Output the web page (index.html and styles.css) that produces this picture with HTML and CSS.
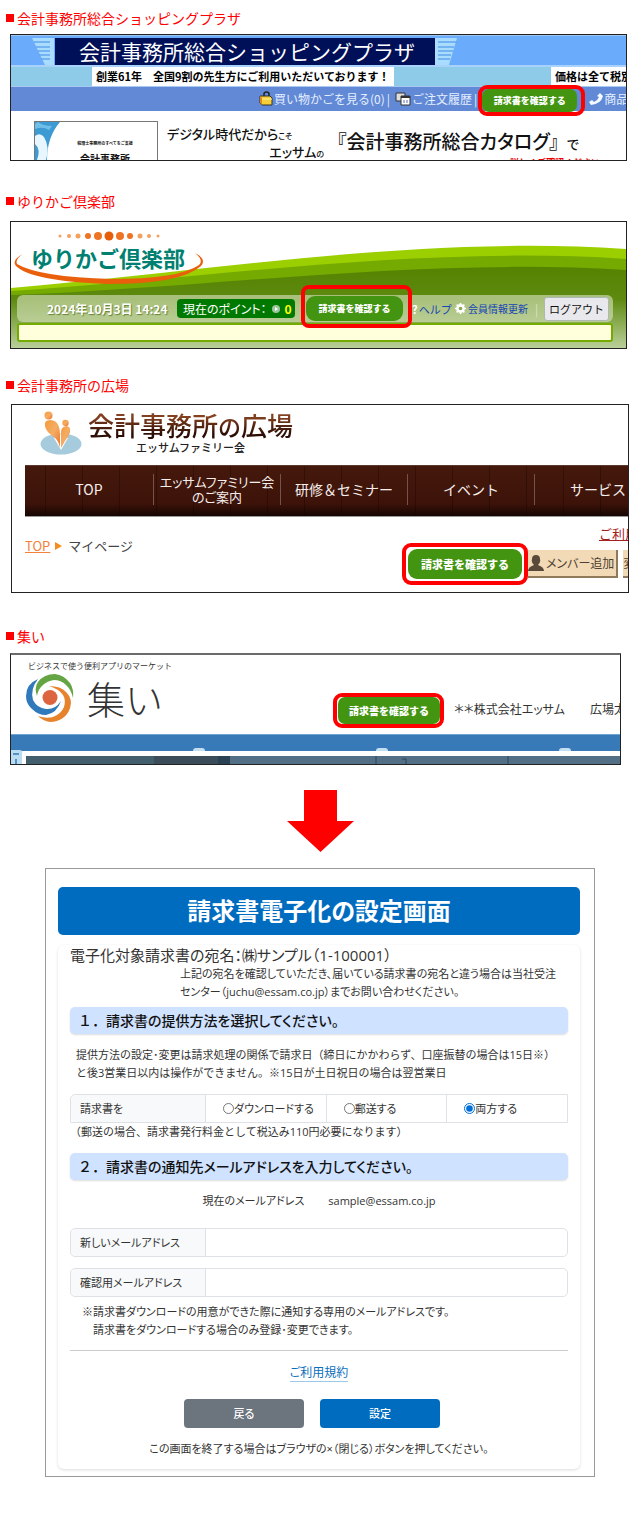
FILE: index.html
```html
<!DOCTYPE html>
<html lang="ja">
<head>
<meta charset="utf-8">
<meta name="viewport" content="width=device-width, initial-scale=1">
<title>請求書電子化の設定</title>
<link rel="stylesheet" href="styles.css">
</head>
<body>
<main class="guide">
  <section class="site site-plaza">
    <h2 class="site-name">会計事務所総合ショッピングプラザ</h2>
    <div class="window plaza">
      <div class="plaza-brand">
        <svg class="stripes" viewBox="0 0 22 27" aria-hidden="true"><path d="M0 0h22v27h-9z" fill="#a9dcff"/><path d="M2 4h16M4 9h14M6 13h12M7 17h11M9 21h9" stroke="#62a5ee" stroke-width="1.6"/></svg>
        <span class="plaza-title">会計事務所総合ショッピングプラザ</span>
        <svg class="stripes" viewBox="0 0 22 27" aria-hidden="true"><path d="M0 0h22l-8 27H0z" fill="#a9dcff"/><path d="M3 4h19M3 9h16M3 13h15M3 17h13M3 21h12" stroke="#62a5ee" stroke-width="1.6"/></svg>
      </div>
      <div class="ticker">
        <span class="ticker-main">創業61年　全国9割の先生方にご利用いただいております！</span>
        <span class="ticker-side">価格は全て税別</span>
      </div>
      <nav class="plaza-nav">
        <svg class="ico16" viewBox="0 0 16 16" aria-hidden="true"><path d="M6 5V3q0-2 2.500-2T11 3v2" fill="none" stroke="#222" stroke-width="1.500"/><path d="M2 5h10l2 2v7H4l-2-2z" fill="#f6ce35" stroke="#333"/><path d="M2 5l2 2v7l-2-2z" fill="#e58a1c"/><path d="M4 8h10" stroke="#fff09a"/></svg>
        <a href="#cart">買い物かごを見る(0)</a><span class="bar">|</span>
        <svg class="ico16 ico-pages" viewBox="0 0 16 16" aria-hidden="true"><path d="M1 2h9v8H1z" fill="#ddd" stroke="#333"/><path d="M6 5h9v9H6z" fill="#fff" stroke="#333"/><path d="M6 6h9" stroke="#333" stroke-width="2"/><path d="M8 9h2v3H8zM11 9h2v3h-2z" fill="#a9b9d9"/></svg>
        <a href="#orders">ご注文履歴</a><span class="bar">|</span>
        <span class="marker marker-plaza"><button class="confirm" type="button">請求書を確認する</button></span>
        <svg class="ico16" viewBox="0 0 16 16" aria-hidden="true"><path d="M12 2l3 3q-2 8-12 9l-2-3 3-2 2 2q4-2 5-5l-2-1z" fill="#f4faff"/></svg>
        <a href="#products">商品検索</a>
      </nav>
      <div class="plaza-hero">
        <div class="book">
          <svg class="book-art" viewBox="0 0 26 38" preserveAspectRatio="none" aria-hidden="true"><path d="M0 0h25Q12 15 12 38H0z" fill="#3d9bd4"/><path d="M0 14q5-4 9 1 6 10 2 23H2q4-11-2-16z" fill="#e8f6ff"/><path d="M3 0q5 4 14 4L14 8Q8 4 0 7V2z" fill="#71bfe8"/></svg>
          <div class="book-copy"><span class="book-small">税理士事務所のすべてをご支援</span><strong class="book-name">会計事務所</strong></div>
        </div>
        <div class="hero-lead">デジタル時代だから<small>こそ</small><span>エッサム<small>の</small></span></div>
        <div class="hero-copy"><p>『会計事務所総合カタログ』<span>で</span></p><strong>詳しくご確認ください</strong></div>
      </div>
    </div>
  </section>

  <section class="site site-yurikago">
    <h2 class="site-name">ゆりかご倶楽部</h2>
    <div class="window yurikago">
      <svg class="hills" viewBox="0 0 616 126" preserveAspectRatio="none" aria-hidden="true">
        <defs><linearGradient id="fade" x1="0" y1="0" x2="0" y2="1"><stop offset="0" stop-color="#558300"/><stop offset=".4" stop-color="#5e8a10"/><stop offset="1" stop-color="#b9d09a"/></linearGradient></defs>
        <path d="M0 66C200 49 410 13 616 27V126H0z" fill="#9ccf00"/>
        <path d="M0 69C200 56 410 23 616 37V126H0z" fill="#75aa00"/>
        <path d="M0 73C200 66 410 35 616 48V126H0z" fill="url(#fade)"/>
      </svg>
      <a class="yurikago-logo" href="#yurikago">
        <svg class="logo-arc" viewBox="0 0 192 58" aria-hidden="true"><g fill="#ee7325"><circle cx="47" cy="8" r="1.500" fill="#f3a15d"/><circle cx="56" cy="8" r="2" fill="#f3a15d"/><circle cx="65" cy="8" r="2.500" fill="#f3a15d"/><circle cx="75" cy="8" r="3"/><circle cx="85" cy="8" r="4"/><circle cx="96" cy="8" r="4.500" fill="#e85d08"/><circle cx="107" cy="8" r="4"/><circle cx="117" cy="8" r="3"/><circle cx="127" cy="8" r="2.500" fill="#f3a15d"/><circle cx="136" cy="8" r="2" fill="#f3a15d"/><circle cx="145" cy="8" r="1.500" fill="#f3a15d"/></g><path d="M10 26Q-2 32 3 38 18 53 94 56q74 0 94-18 6-7-6-13 9 7 4 12-20 14-88 14Q26 49 4 36q-2-5 6-10z" fill="#e95f0b"/></svg>
        <span>ゆりかご倶楽部</span>
      </a>
      <div class="member-bar">
        <time>2024年10月3日 14:24</time>
        <span class="points">現在のポイント： <svg class="ico8" viewBox="0 0 8 8" aria-hidden="true"><circle cx="4" cy="4" r="4" fill="#9bc79b"/><path d="M3 2l3 2-3 2z" fill="#fff"/></svg> <b>0</b></span>
        <span class="marker marker-yurikago"><button class="confirm" type="button">請求書を確認する</button></span>
        <a class="help" href="#help"><span>?</span>ヘルプ</a>
        <a class="update" href="#update"><svg class="ico10" viewBox="0 0 10 10" aria-hidden="true"><circle cx="5" cy="5" r="3" fill="none" stroke="#fff" stroke-width="2"/><path d="M5 0v10M0 5h10M1.500 1.500l7 7M8.500 1.500l-7 7" stroke="#fff" stroke-width="1.500"/><circle cx="5" cy="5" r="1.600" fill="#87a757"/></svg>会員情報更新</a>
        <span class="bar">|</span>
        <button class="logout" type="button">ログアウト</button>
      </div>
      <div class="notice"></div>
    </div>
  </section>

  <section class="site site-hiroba">
    <h2 class="site-name">会計事務所の広場</h2>
    <div class="window hiroba">
      <a class="hiroba-logo" href="#hiroba">
        <svg class="hiroba-mark" viewBox="0 0 42 44" aria-hidden="true"><defs><linearGradient id="person" x2="1" y2="1"><stop stop-color="#f59a3c"/><stop offset=".5" stop-color="#f4ad64"/><stop offset="1" stop-color="#ed6f2c"/></linearGradient></defs><ellipse cx="21" cy="33" rx="20.500" ry="10.500" fill="#a5cbdd"/><path d="M21 39l-7-12 7-4 7 4z" fill="#fff"/><g fill="url(#person)"><circle cx="8.500" cy="4.500" r="4"/><path d="M5 15q-1-6 5-6 7 0 9 7 1 4 1 8v13q-1-7-6-11-8-5-9-11z"/><circle cx="25.500" cy="12" r="3.200"/><path d="M21 24q-1-8 5-9 5 0 4 6-1 4-5 9l-4 7z"/></g></svg>
        <span class="hiroba-name"><b>会計事務所<i>の</i>広場</b><span>エッサムファミリー会</span></span>
      </a>
      <nav class="hiroba-nav">
        <a href="#top">TOP</a><a class="two-line" href="#about">エッサムファミリー会<br>のご案内</a><a href="#seminar">研修＆セミナー</a><a href="#event">イベント</a><a href="#service">サービス</a>
      </nav>
      <div class="hiroba-page">
        <div class="crumbs"><a href="#top">TOP</a><svg class="ico8" viewBox="0 0 8 8" aria-hidden="true"><path d="M0 0l7 4-7 4z" fill="#f68c1e"/></svg><span>マイページ</span></div>
        <div class="hiroba-tools">
          <a class="terms" href="#guide">ご利用案内</a>
          <div class="tool-row">
            <span class="marker marker-hiroba"><button class="confirm" type="button">請求書を確認する</button></span>
            <button class="tool" type="button"><svg class="ico16" viewBox="0 0 16 16" aria-hidden="true"><path d="M0 16q0-4 6-6-3-3-2-6 0-4 4-4t4 4q1 3-2 6 6 2 6 6z" fill="#59493a"/></svg>メンバー追加</button>
            <button class="tool" type="button">変更</button>
          </div>
        </div>
      </div>
    </div>
  </section>

  <section class="site site-tsudoi">
    <h2 class="site-name">集い</h2>
    <div class="window tsudoi">
      <div class="tsudoi-head">
        <a class="tsudoi-logo" href="#tsudoi">
          <small>ビジネスで使う便利アプリのマーケット</small>
          <span><svg class="tsudoi-mark" viewBox="0 0 48 48" aria-hidden="true"><circle cx="24" cy="23.500" r="7.500" fill="#dc6540"/><path d="M12 5Q0 10 0 22q0 8 6 13 6 6 14 6 11-2 15-14-6 9-15 8-9-1-13-9Q4 15 12 5z" fill="#3079bb"/><path d="M11 22Q8 14 12 8 18 0 29 0q9 1 15 9 4 6 3 15-2-9-7-13-5-5-12-5-7 1-11 5-5 4-6 11z" fill="#65a443"/><path d="M23 12q12 0 17 6 5 5 5 11-1 10-8 15-6 4-13 4-7-1-12-6 8 3 15 1 8-3 11-10 2-7-1-12-4-6-14-9z" fill="#e6842e"/></svg><b>集い</b></span>
        </a>
        <span class="marker marker-tsudoi"><button class="confirm" type="button">請求書を確認する</button></span>
        <span class="company">＊＊株式会社エッサム</span><span class="company person">広場太郎</span>
      </div>
      <div class="tsudoi-bar"><svg viewBox="0 0 609 3" preserveAspectRatio="none" aria-hidden="true"><path d="M182 3q0-3 3-3h6q3 0 3 3zM365 3q0-3 3-3h6q3 0 3 3zM548 3q0-3 3-3h6q3 0 3 3z" fill="#c5dff2"/></svg></div>
      <div class="tsudoi-photo"><svg viewBox="0 0 594 8" preserveAspectRatio="none" aria-hidden="true"><path d="M0 0h594v8H0z" fill="#536f85"/><path d="M0 0h128v8H0z" fill="#435f6e"/><path d="M128 0h64v8h-64z" fill="#3c4d5a"/><path d="M192 0h12v8h-12z" fill="#294354"/><path d="M350 0v8M482 0v8M376 3h4v5" fill="none" stroke="#2d475a"/></svg></div>
      <svg class="tsudoi-tab" viewBox="0 0 11 14" aria-hidden="true"><path d="M0 0h9q2 0 2 2v12H0z" fill="#b9dcf3"/><path d="M2 4h6M5 9v5" stroke="#377ab7" stroke-width="1.500"/></svg>
    </div>
  </section>

  <svg class="arrow" viewBox="0 0 67 62" role="img" aria-label="次の画面へ"><path d="M17 0h33v31h17L33.500 62 0 31h17z" fill="#f00"/></svg>

  <section class="screen">
    <h1 class="screen-title">請求書電子化の設定画面</h1>
    <form class="card">
      <p class="addressee">電子化対象請求書の宛名：㈱サンプル（1-100001）</p>
      <p class="addressee-note">上記の宛名を確認していただき、届いている請求書の宛名と違う場合は当社受注<br>センター（juchu@essam.co.jp）までお問い合わせください。</p>
      <h2 class="step"><span>１．</span>請求書の提供方法を選択してください。</h2>
      <p class="explain">提供方法の設定･変更は請求処理の関係で請求日（締日にかかわらず、口座振替の場合は15日※）<br>と後3営業日以内は操作ができません。※15日が土日祝日の場合は翌営業日</p>
      <div class="choices" role="radiogroup" aria-labelledby="method">
        <span class="cell-label" id="method">請求書を</span>
        <label><input type="radio" name="method">ダウンロードする</label>
        <label><input type="radio" name="method">郵送する</label>
        <label><input type="radio" name="method" checked>両方する</label>
      </div>
      <p class="fee">（郵送の場合、請求書発行料金として税込み110円必要になります）</p>
      <h2 class="step"><span>２．</span>請求書の通知先メールアドレスを入力してください。</h2>
      <p class="current"><span>現在のメールアドレス</span><span>sample@essam.co.jp</span></p>
      <div class="field"><label class="cell-label" for="mail">新しいメールアドレス</label><input id="mail" type="email"></div>
      <div class="field"><label class="cell-label" for="mail2">確認用メールアドレス</label><input id="mail2" type="email"></div>
      <p class="mail-note">※請求書ダウンロードの用意ができた際に通知する専用のメールアドレスです。<br>　請求書をダウンロードする場合のみ登録･変更できます。</p>
      <hr>
      <p class="rules"><a href="#rules">ご利用規約</a></p>
      <div class="actions"><button class="btn btn-back" type="button">戻る</button><button class="btn btn-set" type="submit">設定</button></div>
      <p class="closing">この画面を終了する場合はブラウザの×（閉じる）ボタンを押してください。</p>
    </form>
  </section>
</main>
</body>
</html>
```

FILE: styles.css
```css
* { box-sizing: border-box; }
body {
  margin: 0;
  background: #fff;
  color: #333;
  font: 12px/18px "Open Sans", "Noto Sans CJK JP", sans-serif;
}
h1, h2, p { margin: 0; font-weight: 400; }
button, input { font: inherit; margin: 0; }
svg { display: block; flex: none; }
a { color: inherit; text-decoration: none; }

.guide { padding: 8px 0 36px; }
.site { padding: 0 13px 0 10px; }
.site-name {
  display: flex;
  align-items: center;
  gap: 3px;
  margin-left: -4px;
  color: #f00;
  font: 14px/20px "Noto Sans CJK JP", sans-serif;
}
.site-name::before { content: ""; width: 8px; height: 8px; background: #f00; }
.site-plaza { margin-bottom: 30px; }
.site-yurikago { margin-bottom: 26px; }
.site-hiroba { margin-bottom: 33px; padding: 0 11px; }
.site-hiroba .site-name { margin-left: -5px; }
.site-tsudoi { margin-bottom: 25px; padding-right: 19px; }

.window {
  position: relative;
  overflow: hidden;
  margin-top: 6px;
  border: 1px solid #222;
  background: #fff;
  font-family: "Noto Sans CJK JP", sans-serif;
  white-space: nowrap;
}
.ico16 { width: 16px; height: 16px; }
.ico10 { width: 11px; height: 11px; }
.ico8 { width: 8px; height: 8px; }

.marker {
  position: relative;
  z-index: 1;
  display: flex;
  flex: none;
  border: 4px solid #f00;
  border-radius: 9px;
}
.confirm {
  flex: 1;
  padding: 0;
  border: 0;
  border-radius: 7px;
  background: #439511;
  color: #fff;
  font-size: 9px;
  font-weight: 900;
}

/* shopping plaza */
.plaza-brand {
  display: flex;
  align-items: center;
  height: 32px;
  padding: 2px 0 0 21px;
  border-top: 1px solid #9cc5f2;
  border-bottom: 2px solid #a8d2fb;
  background: #6aacfb;
}
.stripes { width: 22px; height: 27px; }
.plaza-title {
  padding: 0 20px 0 24px;
  margin-left: 1px;
  background: #001058;
  color: #fff;
  font-size: 21px;
  line-height: 27px;
}
.ticker {
  display: flex;
  justify-content: space-between;
  height: 19px;
  padding-left: 81px;
  background: #8dcbe9;
  color: #000;
  font-size: 11px;
  font-weight: 700;
  line-height: 18px;
}
.ticker span { background: #fff; }
.ticker-main { padding: 0 4px; }
.ticker-side { width: 75px; padding-left: 4px; overflow: hidden; }
.plaza-nav {
  display: flex;
  align-items: center;
  height: 25px;
  padding-left: 247px;
  border-top: 1px solid #a9c8f3;
  background: #6289d6;
  color: #e4efff;
}
.plaza-nav .bar { margin-left: 2px; }
.ico-pages { margin: 0 1px 0 5px; }
.marker-plaza { width: 107px; height: 31px; margin: 3px 3px 0 1px; padding-right: 4px; }
.plaza-hero { display: flex; height: 49px; padding: 10px 0 0 23px; color: #111; }
.book { display: flex; flex: none; width: 124px; height: 40px; border: 1px solid #777; border-bottom: 0; overflow: hidden; }
.book-art { width: 26px; height: 38px; }
.book-copy { flex: 1; padding-right: 8px; text-align: center; }
.book-small { display: block; padding-top: 16px; font-size: 4px; font-weight: 700; line-height: 10px; }
.book-name { display: block; padding-top: 4px; font-size: 10px; line-height: 14px; }
.hero-lead { flex: none; width: 166px; padding: 5px 0 0 9px; font-size: 13px; font-weight: 500; line-height: 16px; font-feature-settings: "palt"; }
.hero-lead span { display: block; text-align: right; }
.hero-lead small { font-size: 8px; }
.hero-copy { padding-left: 13px; }
.hero-copy p { padding-top: 8px; font-size: 19px; font-weight: 500; line-height: 24px; font-feature-settings: "palt"; }
.hero-copy p span { margin-left: 8px; font-size: 13px; }
.hero-copy strong { display: block; margin-left: 173px; padding-top: 1px; color: #e00; font-size: 9px; line-height: 12px; }

/* yurikago club */
.yurikago { margin-top: 10px; }
.hills { position: absolute; inset: 0; width: 100%; height: 100%; }
.yurikago-logo, .member-bar, .notice { position: relative; }
.yurikago-logo { display: block; width: 192px; height: 63px; margin: 6px 0 4px 2px; }
.yurikago-logo span {
  display: block;
  padding: 12px 0 0 18px;
  color: #008070;
  font-size: 22px;
  font-weight: 700;
  line-height: 34px;
  text-shadow: 1px 1px #fff, -1px -1px #fff, 1px -1px #fff, -1px 1px #fff;
}
.logo-arc { position: absolute; inset: 0; width: 192px; height: 58px; }
.member-bar {
  z-index: 1;
  display: flex;
  align-items: center;
  height: 27px;
  margin: 0 13px 0 6px;
  padding: 0 4px 0 30px;
  border-radius: 6px;
  background: rgba(214, 226, 190, .62);
}
.member-bar > * { flex: none; }
.member-bar time { width: 130px; color: #fff; font-size: 12px; font-weight: 700; text-shadow: 1px 1px 1px #66833a; }
.points {
  display: flex;
  align-items: center;
  gap: 5px;
  width: 118px;
  height: 19px;
  padding: 0 6px;
  border-radius: 4px;
  background: #007900;
  color: #fff;
  font-feature-settings: "palt";
}
.points b { color: #ff0; }
.marker-yurikago { width: 111px; height: 43px; margin: 0 0 4px 6px; padding: 7px 5px 3px 1px; border-radius: 8px; }
.marker-yurikago .confirm { border-radius: 9px; }
.help, .update { display: flex; align-items: center; color: #1645b5; }
.help { width: 43px; font-size: 11px; }
.help span { margin-right: 1px; color: #fff; font-weight: 700; }
.update { gap: 2px; margin-right: 7px; font-size: 10px; }
.member-bar .bar { color: #d9e4c5; }
.logout {
  margin-left: auto;
  height: 24px;
  padding: 0 4px;
  border: 1px solid #aeb7b0;
  border-radius: 3px;
  background: #e9e9ed;
  color: #111;
  font-size: 11px;
  line-height: 20px;
}
.notice { height: 19px; margin: 1px 13px 6px 6px; border: 2px solid #75aa00; border-radius: 3px; background: #ffffdc; }

/* hiroba */
.hiroba { margin-top: 9px; }
.hiroba-logo { display: flex; gap: 6px; height: 60px; padding: 6px 0 0 28px; }
.hiroba-mark { width: 42px; height: 44px; }
.hiroba-name { display: flex; flex-direction: column; align-items: center; color: #3b1a0c; }
.hiroba-name b {
  background: linear-gradient(#84401f 20%, #2b0d05 80%);
  background-clip: text;
  color: transparent;
  font-size: 26px;
  font-weight: 500;
  line-height: 28px;
}
.hiroba-name i { font-size: 23px; font-style: normal; }
.hiroba-name span { color: #222; font-size: 11px; font-weight: 500; line-height: 14px; }
.hiroba-nav {
  display: flex;
  align-items: center;
  height: 52px;
  margin-left: 13px;
  padding-bottom: 4px;
  border-top: 1px solid #5b3a2c;
  border-bottom: 1px solid #999;
  background:
    repeating-linear-gradient(90deg, transparent 0 20px, rgba(15, 3, 0, .35) 20px 21px, transparent 21px 37px),
    linear-gradient(#45180c 0%, #3d1309 75%, #160502 100%);
  color: #f5eeea;
  font-size: 14px;
  line-height: 15px;
  text-align: center;
}
.hiroba-nav a {
  display: flex;
  flex: 0 0 127px;
  align-items: center;
  justify-content: center;
  height: 31px;
  border-right: 1px solid #735448;
}
.hiroba-nav a:first-child { flex-basis: 129px; }
.hiroba-nav .two-line { font-size: 13px; font-feature-settings: "palt"; }
.hiroba-page { display: flex; justify-content: space-between; height: 75px; padding-left: 13px; }
.crumbs { display: flex; align-items: center; gap: 5px; height: 57px; font-size: 13px; color: #444; }
.crumbs a { color: #f5803a; text-decoration: underline; }
.hiroba-tools { width: 226px; }
.terms { display: block; margin-left: 197px; padding-top: 8px; color: #a32020; font-size: 13px; line-height: 18px; text-decoration: underline; }
.tool-row { display: flex; align-items: center; }
.marker-hiroba { width: 126px; height: 42px; padding: 2px; border-width: 4px; }
.marker-hiroba .confirm { border-radius: 9px; font-size: 11px; }
.tool {
  display: flex;
  flex: none;
  align-items: center;
  gap: 2px;
  height: 28px;
  margin-right: 5px;
  padding: 0 2px 0 0;
  border: 0;
  border-right: 2px solid #8f7a5c;
  border-bottom: 2px solid #8f7a5c;
  background: #f3dab6;
  color: #4c3f33;
  font-size: 12px;
  font-feature-settings: "palt";
}

/* tsudoi */
.tsudoi { margin-top: 7px; border-top: 2px solid #6b6b6b; }
.tsudoi-head { display: flex; height: 79px; }
.tsudoi-head > * { flex: none; }
.tsudoi-logo { width: 306px; padding: 3px 0 0 15px; color: #333; }
.tsudoi-logo small { display: block; padding-left: 2px; font-size: 8px; line-height: 16px; }
.tsudoi-logo span { display: flex; gap: 13px; }
.tsudoi-logo b { font-size: 38px; font-weight: 300; line-height: 48px; }
.tsudoi-mark { width: 48px; height: 48px; }
.marker-tsudoi { width: 111px; height: 35px; margin: 38px 10px 0 16px; padding: 0 0 0 1px; }
.marker-tsudoi .confirm { font-size: 10px; }
.company { padding-top: 45px; color: #333; font-size: 12px; font-feature-settings: "palt"; }
.person { margin-left: 25px; }
.tsudoi-bar { display: flex; align-items: flex-end; height: 17px; background: #377ab7; border-top: 1px solid #6fa3d0; }
.tsudoi-bar svg { width: 100%; height: 3px; }
.tsudoi-photo { height: 13px; padding: 5px 0 0 15px; }
.tsudoi-photo svg { width: 100%; height: 8px; }
.tsudoi-tab { position: absolute; left: 0; bottom: 0; width: 11px; height: 14px; }

.arrow { width: 67px; height: 62px; margin: 0 auto 16px; }

/* setting screen */
.screen { margin: 0 45px; padding: 18px 14px 7px 12px; border: 1px solid #999; }
.screen-title {
  border-radius: 5px;
  background: #006cc0;
  color: #fff;
  font-size: 24px;
  font-weight: 700;
  line-height: 48px;
  text-align: center;
  font-feature-settings: "palt";
}
.card {
  margin-top: 10px;
  padding: 0 12px 11px;
  border-radius: 6px;
  box-shadow: 0 1px 3px rgba(0, 0, 0, .14);
  font-size: 11px;
  font-feature-settings: "palt";
}
.card p { white-space: nowrap; }
.card .addressee { font-size: 15px; line-height: 20px; }
.addressee-note { padding-left: 110px; }
.step {
  margin-top: 6px;
  padding-left: 8px;
  border-radius: 5px;
  background: #cfe2ff;
  box-shadow: 0 1px 2px rgba(0, 0, 0, .14);
  color: #111;
  font-size: 14px;
  font-weight: 500;
  line-height: 27px;
}
.step span, .explain, .fee { font-feature-settings: normal; }
.explain { padding: 12px 0 12px 6px; }
.choices { display: grid; grid-template-columns: 134px 1fr 1fr 1fr; border: 1px solid #dee2e6; border-radius: 5px 0 0 0; }
.choices label { display: flex; align-items: center; border-left: 1px solid #dee2e6; padding-left: 17px; }
.choices input { width: 11px; height: 11px; accent-color: #0070d8; }
.cell-label { padding-left: 9px; border-radius: 5px 0 0 5px; background: #f8f9fa; line-height: 27px; }
.fee { padding-bottom: 6px; }
.current { display: flex; justify-content: center; gap: 24px; padding: 12px 0 18px; }
.field { display: grid; grid-template-columns: 134px 1fr; margin-bottom: 11px; border: 1px solid #dee2e6; border-radius: 5px; }
.field input { min-width: 0; padding: 0 8px; border: 0; border-left: 1px solid #dee2e6; border-radius: 0 5px 5px 0; background: #fff; }
.mail-note { margin-top: -5px; padding-left: 12px; }
.card hr { height: 1px; margin: 11px 0 13px; border: 0; background: #ccc; }
.rules { font-size: 12px; text-align: center; }
.rules a { color: #0a6ebd; border-bottom: 1px solid #9cc8ea; }
.actions { display: flex; justify-content: center; gap: 16px; margin: 17px 14px 12px 0; }
.btn { flex: 0 1 120px; height: 29px; border: 0; border-radius: 4px; color: #fff; font-weight: 500; }
.btn-back { background: #6c757d; }
.btn-set { background: #006cc0; }
.closing { text-align: center; }
```
